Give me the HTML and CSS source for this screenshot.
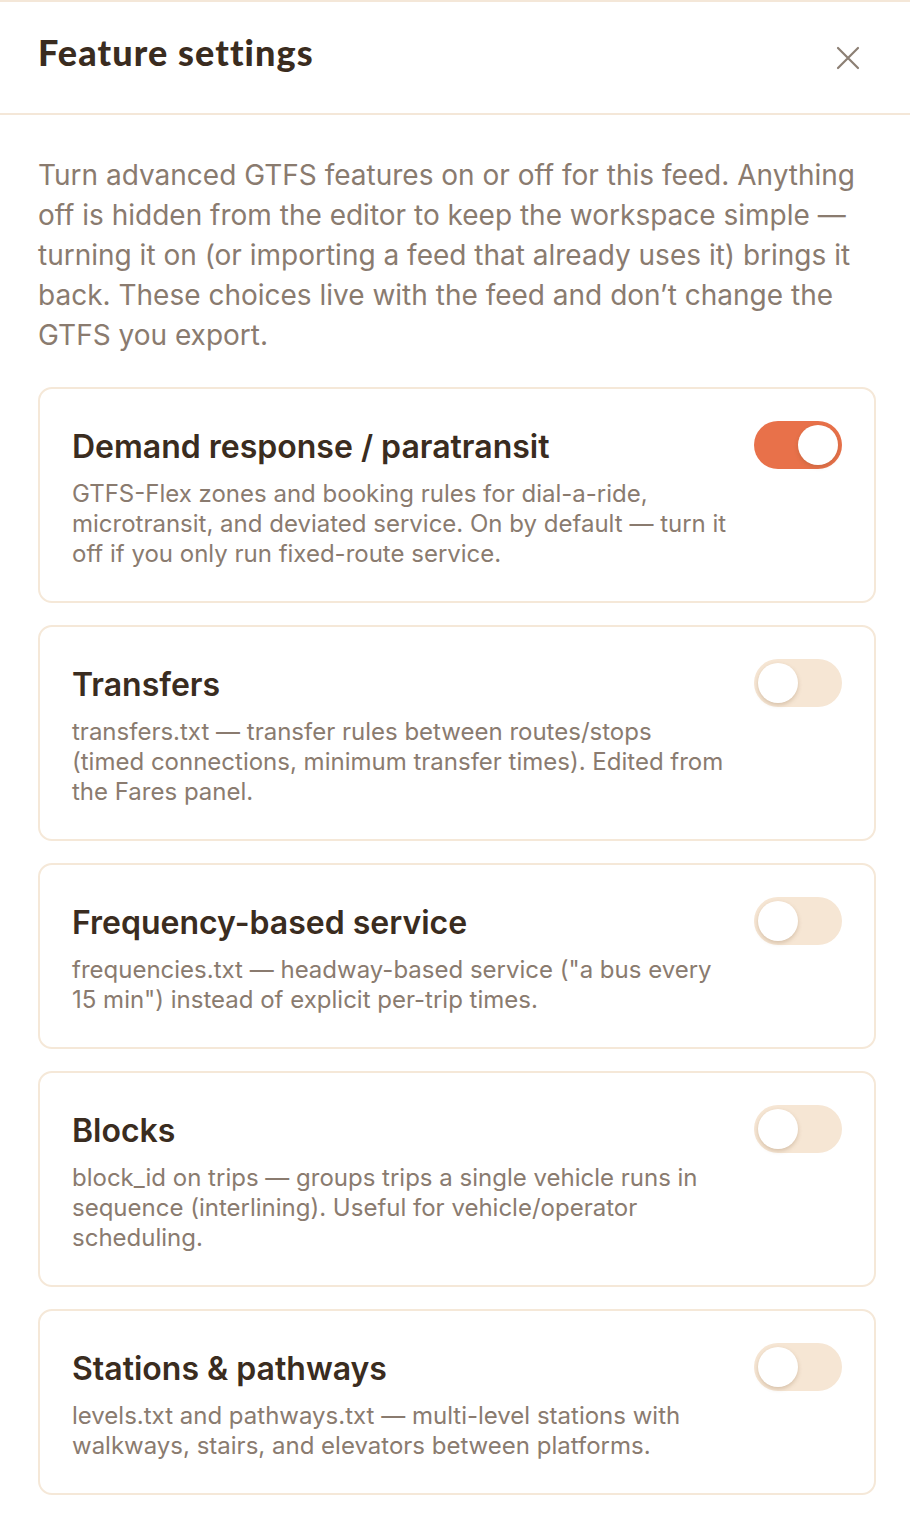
FILE: index.html
```html
<!DOCTYPE html>
<html lang="en">
<head>
    <meta charset="UTF-8">
    <meta name="viewport" content="width=device-width, initial-scale=1.0">
    <title>Feature settings</title>
    <link rel="stylesheet" href="styles.css">
</head>
<body>
    <div class="panel">
        <div class="panel-header">
            <h1>Feature settings</h1>
            <button class="close-btn" aria-label="Close">
                <svg width="24" height="24" viewBox="0 0 24 24" fill="none" stroke="currentColor" stroke-width="2.2" stroke-linecap="round">
                    <path d="M2 2 L22 22 M22 2 L2 22"/>
                </svg>
            </button>
        </div>

        <div class="panel-body">
            <p class="intro">Turn advanced GTFS features on or off for this feed. Anything off is hidden from the editor to keep the workspace simple — turning it on (or importing a feed that already uses it) brings it back. These choices live with the feed and don’t change the GTFS you export.</p>

            <div class="feature">
                <div class="feature-text">
                    <h2>Demand response / paratransit</h2>
                    <p>GTFS-Flex zones and booking rules for dial-a-ride, microtransit, and deviated service. On by default — turn it off if you only run fixed-route service.</p>
                </div>
                <span class="toggle on"><span class="knob"></span></span>
            </div>

            <div class="feature">
                <div class="feature-text">
                    <h2>Transfers</h2>
                    <p>transfers.txt — transfer rules between routes/stops (timed connections, minimum transfer times). Edited from the Fares panel.</p>
                </div>
                <span class="toggle"><span class="knob"></span></span>
            </div>

            <div class="feature">
                <div class="feature-text">
                    <h2>Frequency-based service</h2>
                    <p>frequencies.txt — headway-based service ("a bus every 15 min") instead of explicit per-trip times.</p>
                </div>
                <span class="toggle"><span class="knob"></span></span>
            </div>

            <div class="feature">
                <div class="feature-text">
                    <h2>Blocks</h2>
                    <p>block_id on trips — groups trips a single vehicle runs in sequence (interlining). Useful for vehicle/operator scheduling.</p>
                </div>
                <span class="toggle"><span class="knob"></span></span>
            </div>

            <div class="feature">
                <div class="feature-text">
                    <h2>Stations &amp; pathways</h2>
                    <p>levels.txt and pathways.txt — multi-level stations with walkways, stairs, and elevators between platforms.</p>
                </div>
                <span class="toggle"><span class="knob"></span></span>
            </div>
        </div>
    </div>
</body>
</html>
```

FILE: styles.css
```css
body {
    margin: 0;
    background: #fff;
    font-family: Inter, "Noto Sans", sans-serif;
}
.panel {
    border-top: 2px solid #f4e7d8;
}
.panel-header {
    display: flex;
    align-items: center;
    justify-content: space-between;
    height: 111px;
    padding: 0 50px 0 38px;
    border-bottom: 2px solid #f4e7d8;
}
.panel-header h1 {
    margin: 0 0 12px;
    font-family: Lato, sans-serif;
    font-weight: 900;
    font-size: 36px;
    letter-spacing: 1.1px;
    color: #3a2c20;
}
.close-btn {
    background: none;
    border: none;
    padding: 0;
    color: #8c7f74;
    cursor: pointer;
    display: flex;
}
.panel-body {
    padding: 40px 34px 40px 38px;
}
.intro {
    margin: 0 0 32px;
    font-size: 28px;
    line-height: 40px;
    color: #8a7b6f;
}
.feature {
    display: flex;
    justify-content: space-between;
    align-items: flex-start;
    gap: 24px;
    border: 2px solid #f5e8d8;
    border-radius: 14px;
    padding: 32px 32px 32px 32px;
    margin-bottom: 22px;
}
.feature h2 {
    margin: 6px 0 12px;
    font-size: 32px;
    font-weight: 600;
    line-height: 40px;
    color: #3a2c20;
}
.feature p {
    margin: 0;
    font-size: 24px;
    line-height: 30px;
    color: #8a7b6f;
}
.toggle {
    flex: none;
    position: relative;
    width: 88px;
    height: 48px;
    border-radius: 24px;
    background: #f6e6d4;
}
.toggle .knob {
    position: absolute;
    top: 4px;
    left: 4px;
    width: 40px;
    height: 40px;
    border-radius: 50%;
    background: #fff;
    box-shadow: 0 2px 4px rgba(120, 80, 40, 0.25);
}
.toggle.on {
    background: #e8714a;
}
.toggle.on .knob {
    left: 44px;
}
```
